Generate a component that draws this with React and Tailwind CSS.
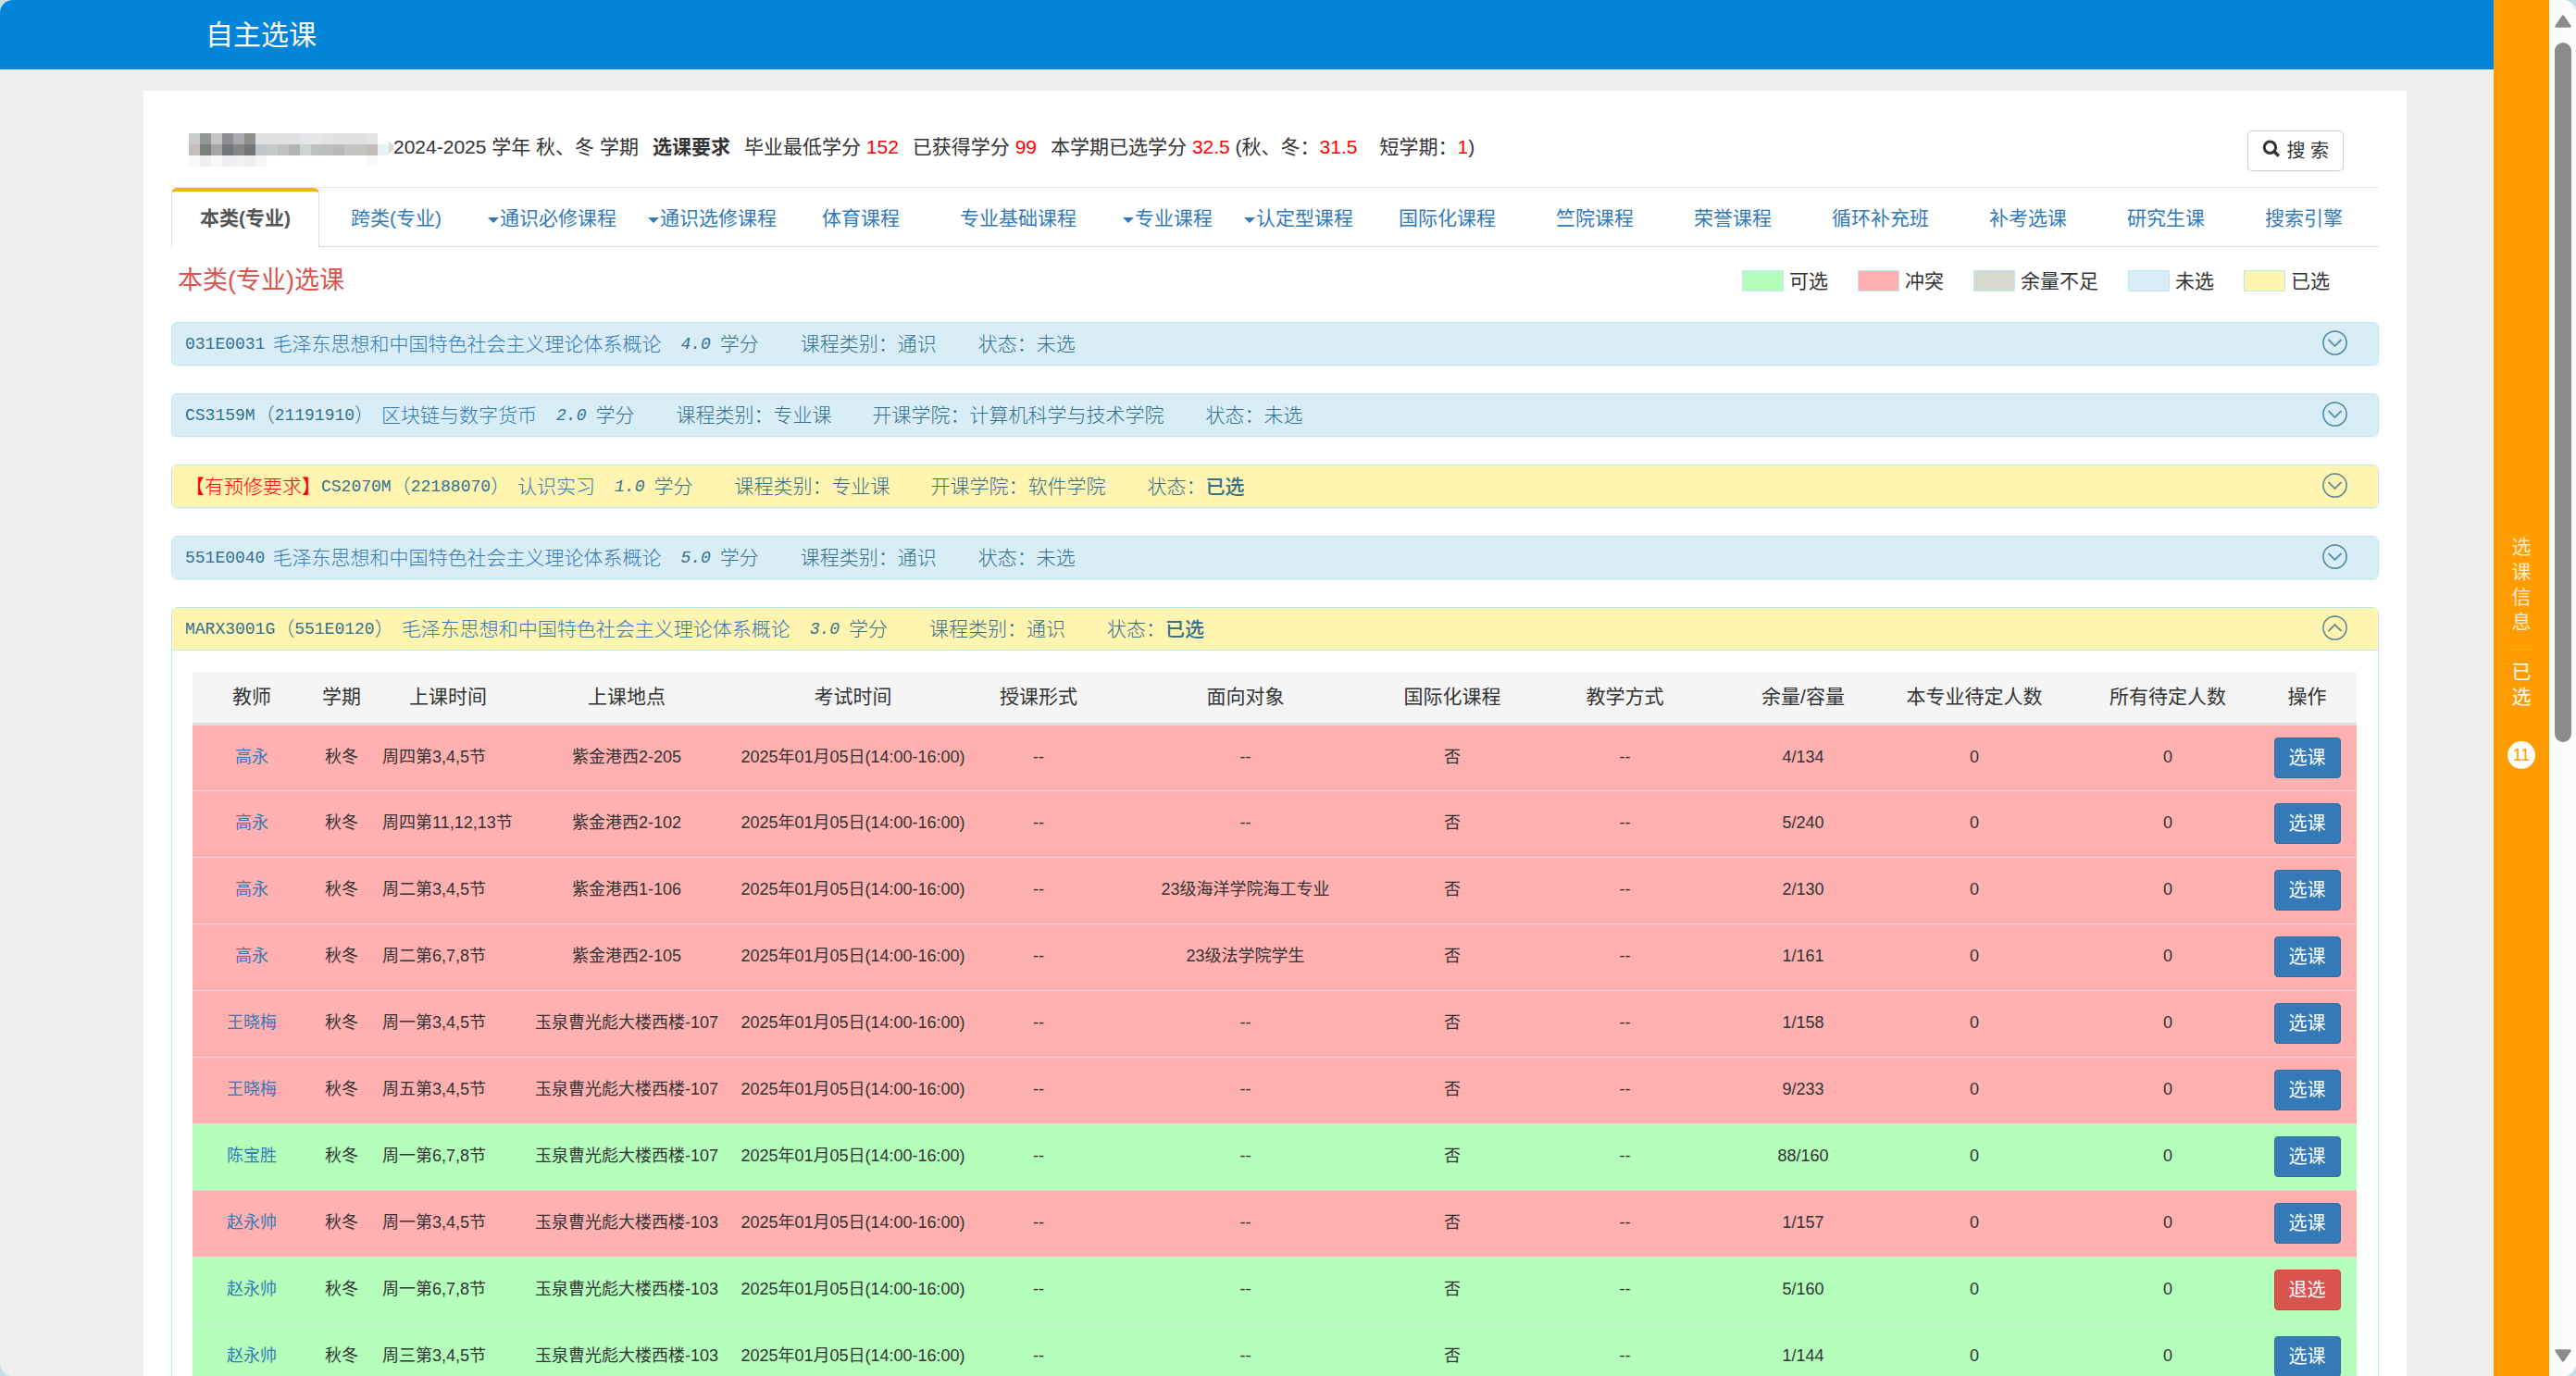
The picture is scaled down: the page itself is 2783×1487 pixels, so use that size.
import React from "react";

const TABS = [
  { label: "本类(专业)", active: true },
  { label: "跨类(专业)" },
  { label: "通识必修课程", caret: true },
  { label: "通识选修课程", caret: true },
  { label: "体育课程" },
  { label: "专业基础课程" },
  { label: "专业课程", caret: true },
  { label: "认定型课程", caret: true },
  { label: "国际化课程" },
  { label: "竺院课程" },
  { label: "荣誉课程" },
  { label: "循环补充班" },
  { label: "补考选课" },
  { label: "研究生课" },
  { label: "搜索引擎" },
];

const LEGEND = [
  { label: "可选", color: "bg-[#b3ffbb]" },
  { label: "冲突", color: "bg-[#ffb0b0]" },
  { label: "余量不足", color: "bg-[#d5d9cf]" },
  { label: "未选", color: "bg-[#d9edf7]" },
  { label: "已选", color: "bg-[#fff5b1]" },
];

const COURSES = [
  { code: "031E0031", name: "毛泽东思想和中国特色社会主义理论体系概论", credit: "4.0", kind: "通识" },
  { code: "CS3159M", alt: "21191910", name: "区块链与数字货币", credit: "2.0", kind: "专业课", college: "计算机科学与技术学院" },
  { code: "CS2070M", alt: "22188070", name: "认识实习", credit: "1.0", kind: "专业课", college: "软件学院", chosen: true, prereq: true },
  { code: "551E0040", name: "毛泽东思想和中国特色社会主义理论体系概论", credit: "5.0", kind: "通识" },
  { code: "MARX3001G", alt: "551E0120", name: "毛泽东思想和中国特色社会主义理论体系概论", credit: "3.0", kind: "通识", chosen: true, open: true },
];

const COLUMNS = [
  ["教师", "w-[128px]"],
  ["学期", "w-[66px]"],
  ["上课时间", "w-[164px]"],
  ["上课地点", "w-[222px]"],
  ["考试时间", "w-[267px]"],
  ["授课形式", "w-[134px]"],
  ["面向对象", "w-[313px]"],
  ["国际化课程", "w-[134px]"],
  ["教学方式", "w-[239px]"],
  ["余量/容量", "w-[146px]"],
  ["本专业待定人数", "w-[224px]"],
  ["所有待定人数", "w-[194px]"],
  ["操作", "w-[107px]"],
];

const CLASSES = [
  ["高永", "周四第3,4,5节", "紫金港西2-205", "--", "4/134", "conflict"],
  ["高永", "周四第11,12,13节", "紫金港西2-102", "--", "5/240", "conflict"],
  ["高永", "周二第3,4,5节", "紫金港西1-106", "23级海洋学院海工专业", "2/130", "conflict"],
  ["高永", "周二第6,7,8节", "紫金港西2-105", "23级法学院学生", "1/161", "conflict"],
  ["王晓梅", "周一第3,4,5节", "玉泉曹光彪大楼西楼-107", "--", "1/158", "conflict"],
  ["王晓梅", "周五第3,4,5节", "玉泉曹光彪大楼西楼-107", "--", "9/233", "conflict"],
  ["陈宝胜", "周一第6,7,8节", "玉泉曹光彪大楼西楼-107", "--", "88/160", "free"],
  ["赵永帅", "周一第3,4,5节", "玉泉曹光彪大楼西楼-103", "--", "1/157", "conflict"],
  ["赵永帅", "周一第6,7,8节", "玉泉曹光彪大楼西楼-103", "--", "5/160", "chosen"],
  ["赵永帅", "周三第3,4,5节", "玉泉曹光彪大楼西楼-103", "--", "1/144", "free"],
];

const MOSAIC = [
  "#cbcbc7 #929798 #c5c6c1 #8f8f92 #a7aaae #908f8b #dee2e5 #e1e1e1 #e1e1e1 #e0e1e1 #e5e7ea #e6e7e6 #e2e3e3 #e1e1e1 #e1e1e1 #e1e1e1 #e3e5e4".split(" "),
  "#c4bfba #7d7e7e #a5a5a5 #73767a #868686 #757573 #bec6c9 #c5c9ca #bfc0c0 #b4b5b5 #ced4d3 #bcc0c0 #bcbfbd #b8bbb9 #c3c3c1 #c3c3c1 #c1bcb8 #e9f2f5".split(" "),
  "#f9f9f9 #eff0f3 #f9f8f7 #eff0f3 #f1f1f2 #efefef #f5f6f6".split(" "),
];

function Mosaic() {
  return (
    <svg width="221" height="36" viewBox="0 0 221 36" aria-hidden="true" shapeRendering="crispEdges">
      {MOSAIC.map((row, y) =>
        row.map((fill, x) => <rect key={`${x}-${y}`} x={x * 12} y={y * 12} width="12" height="12" fill={fill} />)
      )}
      <rect x="192" y="24" width="12" height="10" fill="#f8f8f8" />
      <path d="M216 9l5 5v3l-5 5z" fill="#dcdad6" />
    </svg>
  );
}

function Summary() {
  return (
    <div className="flex items-start justify-between pb-[17px] pl-[19px] pr-[38px]">
      <div className="flex items-start">
        <div className="mt-[3px]">
          <Mosaic />
        </div>
        <p className="flex gap-[15px] leading-9">
          <span>2024-2025 学年 秋、冬 学期</span>
          <b>选课要求</b>
          <span>毕业最低学分 <span className="text-[#ff0000]">152</span></span>
          <span>已获得学分 <span className="text-[#ff0000]">99</span></span>
          <span>
            本学期已选学分 <span className="text-[#ff0000]">32.5</span> (秋、冬：
            <span className="mr-6 text-[#ff0000]">31.5</span>
            短学期：<span className="text-[#ff0000]">1</span>)
          </span>
        </p>
      </div>
      <button type="button" className="flex h-11 items-center rounded-[5px] border border-[#cccccc] bg-white px-[15px] text-xl">
        <svg width="20" height="20" viewBox="0 0 20 20" className="mr-1.5 mb-1" aria-hidden="true">
          <circle cx="8.4" cy="8.2" r="6.2" fill="none" stroke="#333" strokeWidth="3" />
          <path d="M12.8 12.6l5 5" stroke="#333" strokeWidth="3.6" />
        </svg>
        搜 索
      </button>
    </div>
  );
}

function Tabs() {
  return (
    <nav className="border-y border-b-[#dddddd] border-t-[#e7e7e7]">
      <ul className="flex gap-[3px] whitespace-nowrap">
        {TABS.map((tab) => (
          <li key={tab.label} className="-mb-px">
            <a
              href="#"
              className={
                tab.active
                  ? "flex h-16 items-center rounded-t-[6px] border-x border-t-4 border-x-[#dddddd] border-t-[#f0b31a] bg-white px-[30px] pb-0.5 font-bold text-[#555555]"
                  : tab.caret
                    ? "flex h-16 items-center pl-4 pr-[15px] pt-0.5 text-[#337ab7]"
                    : "flex h-16 items-center px-[31px] pt-0.5 text-[#337ab7]"
              }
            >
              {tab.caret && (
                <svg width="13" height="6" viewBox="0 0 13 6" className="mt-[3px]" aria-hidden="true">
                  <path d="M0 0h12l-6 6z" fill="currentColor" />
                </svg>
              )}
              {tab.label}
            </a>
          </li>
        ))}
      </ul>
    </nav>
  );
}

function Chevron({ up }) {
  return (
    <svg width="27" height="27" viewBox="0 0 27 27" fill="none" stroke="#31708f" aria-hidden="true">
      <circle cx="13.5" cy="13.5" r="12.6" strokeWidth="1.5" opacity="0.85" />
      <path d={up ? "M6.5 17l7-7 7 7" : "M6.5 10l7 7 7-7"} strokeWidth="1.8" opacity="0.75" />
    </svg>
  );
}

const CODE = "font-['Liberation_Mono','Noto_Sans_CJK_SC',monospace] text-lg leading-none";

function Course({ course }) {
  return (
    <section className="rounded-[6px] border border-[#bce8f1] bg-white shadow-[0_1px_2px_rgba(0,0,0,0.06)]">
      <header
        className={
          (course.chosen ? "bg-[#fff5b1] " : "bg-[#d9edf7] ") +
          (course.open ? "h-[46px] rounded-t-[5px] border-b border-[#bce8f1] " : "h-[45px] rounded-[5px] ") +
          "flex items-center justify-between pl-3.5 pr-[33px] font-light text-[#31708f]"
        }
      >
        <h4 className="flex items-center whitespace-nowrap">
          {course.prereq && <span className="text-[#ff0000]">【有预修要求】</span>}
          <span className={CODE}>{course.code}</span>
          {course.alt && (
            <>
              <span>（</span>
              <span className={CODE}>{course.alt}</span>
              <span>）</span>
            </>
          )}
          <a href="#" className="ml-2 text-[#337ab7]">{course.name}</a>
          <i className={"ml-[21px] mr-2.5 " + CODE}>{course.credit}</i>
          <span>学分</span>
          <span className="ml-[45px]">课程类别：{course.kind}</span>
          {course.college && <span className="ml-11">开课学院：{course.college}</span>}
          <span className="ml-[45px]">
            状态：{course.chosen ? <b className="font-medium">已选</b> : "未选"}
          </span>
        </h4>
        <button type="button" aria-label={course.open ? "收起" : "展开"} className="mb-0.5">
          <Chevron up={course.open} />
        </button>
      </header>
      {course.open && (
        <div className="pb-6 pl-[22px] pr-[23px] pt-[23px]">
          <Classes />
        </div>
      )}
    </section>
  );
}

function Classes() {
  return (
    <table className="w-full table-fixed border-collapse whitespace-nowrap text-center text-lg">
      <thead>
        <tr className="h-14 border-b-[3px] border-[#dddddd] bg-[#f5f5f5] text-[21px]">
          {COLUMNS.map(([name, width]) => (
            <th key={name} scope="col" className={width + " font-normal"}>
              {name}
            </th>
          ))}
        </tr>
      </thead>
      <tbody>
        {CLASSES.map(([teacher, time, place, target, seats, state], i) => (
          <tr
            key={i}
            className={
              (state === "conflict" ? "bg-[#ffb0b0]" : "bg-[#b3ffbb]") +
              " h-[72px] border-b border-[#dddddd] [&>td]:pb-0.5 [&>td:last-child]:pb-0"
            }
          >
            <td>
              <a href="#" className="text-[#337ab7]">{teacher}</a>
            </td>
            <td>秋冬</td>
            <td className="pl-[11px] text-left">{time}</td>
            <td>{place}</td>
            <td>2025年01月05日(14:00-16:00)</td>
            <td>--</td>
            <td>{target}</td>
            <td>否</td>
            <td>--</td>
            <td>{seats}</td>
            <td>0</td>
            <td>0</td>
            <td>
              <button
                type="button"
                className={
                  (state === "chosen" ? "border-[#d43f3a] bg-[#d9534f]" : "border-[#2e6da4] bg-[#337ab7]") +
                  " h-11 rounded-[4px] border px-[15px] align-middle text-xl text-white"
                }
              >
                {state === "chosen" ? "退选" : "选课"}
              </button>
            </td>
          </tr>
        ))}
      </tbody>
    </table>
  );
}

function Sidebar() {
  return (
    <aside className="flex w-[60px] shrink-0 flex-col items-center bg-[#ff9d00] pt-[577px] leading-[27px] text-white">
      <button type="button" className="flex flex-col items-center">
        <span className="w-[21px] break-all text-white/80">选课信息</span>
        <span className="mb-2.5 mt-4 h-px w-[30px] bg-[#ffb300]" />
        <span className="w-[21px] break-all">已选</span>
        <span className="mt-[35px] h-[30px] w-[30px] rounded-full bg-white text-lg leading-[30px] text-[#ff9d00]">11</span>
      </button>
    </aside>
  );
}

function Scrollbar() {
  return (
    <div className="flex w-[29px] shrink-0 flex-col bg-[#fcfcfc] pb-[15px] pl-1.5 pt-4" aria-hidden="true">
      <svg width="18" height="14" viewBox="0 0 18 14" className="shrink-0">
        <path d="M9 1.5l7.5 11h-15z" fill="#8b8b8b" stroke="#8b8b8b" strokeWidth="2.4" strokeLinejoin="round" />
      </svg>
      <div className="mb-auto mt-4 h-[756px] w-[18px] shrink-0 rounded-full bg-[#8b8b8b]" />
      <svg width="18" height="14" viewBox="0 0 18 14" className="shrink-0">
        <path d="M9 12.5l7.5-11h-15z" fill="#8b8b8b" stroke="#8b8b8b" strokeWidth="2.4" strokeLinejoin="round" />
      </svg>
    </div>
  );
}

export default function App() {
  return (
    <div className="h-screen bg-[#c5dfe2] font-['Liberation_Sans','Noto_Sans_CJK_SC',sans-serif] text-[21px] leading-[30px] text-[#333333]">
      <div className="flex h-full overflow-hidden rounded-[14px] bg-[#efefef]">
        <main className="min-w-0 flex-1 overflow-hidden">
          <header className="flex h-[75px] items-center bg-[#0284d8] pl-[222px]">
            <h1 className="text-3xl text-white">自主选课</h1>
          </header>
          <div className="ml-[155px] mr-[94px] mt-[23px] bg-white px-[30px] pb-10 pt-[43px]">
            <Summary />
            <Tabs />
            <div className="mb-[9px] flex h-[72px] items-center justify-between pl-[7px] pr-[53px]">
              <h2 className="text-[27px] text-[#d9534f]">本类(专业)选课</h2>
              <ul className="flex gap-8">
                {LEGEND.map((item) => (
                  <li key={item.label} className="flex items-center gap-1.5">
                    <span className={item.color + " h-[23px] w-[45px] border border-[#bce8f1]"} />
                    <span className="pt-0.5">{item.label}</span>
                  </li>
                ))}
              </ul>
            </div>
            <div className="flex flex-col gap-[30px]">
              {COURSES.map((course) => (
                <Course key={course.code} course={course} />
              ))}
            </div>
          </div>
        </main>
        <Sidebar />
        <Scrollbar />
      </div>
    </div>
  );
}
